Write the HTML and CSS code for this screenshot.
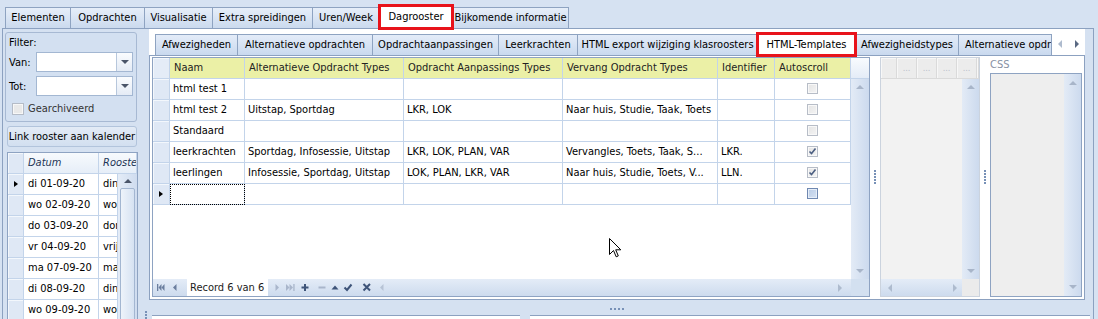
FILE: index.html
```html
<!DOCTYPE html>
<html lang="nl">
  <head>
    <meta charset="UTF-8" />
    <title>Dagrooster</title>
    <link rel="stylesheet" href="styles.css">
  </head>
  <body>
    <div class="tabs">
      <div class="tab">Elementen</div>
      <div class="tab">Opdrachten</div>
      <div class="tab">Visualisatie</div>
      <div class="tab">Extra spreidingen</div>
      <div class="tab">Uren/Week</div>
      <div class="tab active">Dagrooster</div>
      <div class="tab">Bijkomende informatie</div>
    </div>

    <div class="page">
      <!-- linker paneel: filter + dagen -->
      <div class="side">
        <div class="filter">
          <div class="filter-title">Filter:</div>
          <div class="filter-row">
            <span>Van:</span>
            <div class="combo"><span class="combo-btn"><i class="arr-down dark"></i></span></div>
          </div>
          <div class="filter-row">
            <span>Tot:</span>
            <div class="combo"><span class="combo-btn"><i class="arr-down dark"></i></span></div>
          </div>
          <label class="check"><span class="check-box"></span>Gearchiveerd</label>
        </div>
        <button class="link-btn">Link rooster aan kalender</button>
        <div class="dgrid">
          <div class="drow dhead">
            <div class="dc ind"></div>
            <div class="dc">Datum</div>
            <div class="dc">Rooste</div>
          </div>
          <div class="dbody">
            <div class="drow"><div class="dc ind"><i class="row-arrow"></i></div><div class="dc">di 01-09-20</div><div class="dc">dinsdag</div></div>
            <div class="drow"><div class="dc ind"></div><div class="dc">wo 02-09-20</div><div class="dc">woensdag</div></div>
            <div class="drow"><div class="dc ind"></div><div class="dc">do 03-09-20</div><div class="dc">donderdag</div></div>
            <div class="drow"><div class="dc ind"></div><div class="dc">vr 04-09-20</div><div class="dc">vrijdag</div></div>
            <div class="drow"><div class="dc ind"></div><div class="dc">ma 07-09-20</div><div class="dc">maandag</div></div>
            <div class="drow"><div class="dc ind"></div><div class="dc">di 08-09-20</div><div class="dc">dinsdag</div></div>
            <div class="drow"><div class="dc ind"></div><div class="dc">wo 09-09-20</div><div class="dc">woensdag</div></div>
          </div>
          <div class="dscroll">
            <i class="arr-up dark"></i>
            <span class="thumb"></span>
          </div>
        </div>
      </div>

      <div class="vsplit"><span class="vdots short"></span></div>

      <!-- rechter deel: tabbladen -->
      <div class="main">
        <div class="itabs">
          <div class="itab">Afwezigheden</div>
          <div class="itab">Alternatieve opdrachten</div>
          <div class="itab">Opdrachtaanpassingen</div>
          <div class="itab">Leerkrachten</div>
          <div class="itab">HTML export wijziging klasroosters</div>
          <div class="itab active">HTML-Templates</div>
          <div class="itab">Afwezigheidstypes</div>
          <div class="itab cut">Alternatieve opdrachten</div>
          <div class="itab-arrows">
            <i class="arr-left"></i>
            <i class="arr-right dark"></i>
          </div>
        </div>

        <div class="ipage">
          <div class="grid">
            <div class="gbody">
              <div class="grow ghead">
                <div class="gc ind"></div>
                <div class="gc">Naam</div>
                <div class="gc">Alternatieve Opdracht Types</div>
                <div class="gc">Opdracht Aanpassings Types</div>
                <div class="gc">Vervang Opdracht Types</div>
                <div class="gc">Identifier</div>
                <div class="gc">Autoscroll</div>
              </div>
              <div class="grow">
                <div class="gc ind"></div>
                <div class="gc">html test 1</div>
                <div class="gc"></div>
                <div class="gc"></div>
                <div class="gc"></div>
                <div class="gc"></div>
                <div class="gc chk"><span class="cbx"></span></div>
              </div>
              <div class="grow">
                <div class="gc ind"></div>
                <div class="gc">html test 2</div>
                <div class="gc">Uitstap, Sportdag</div>
                <div class="gc">LKR, LOK</div>
                <div class="gc">Naar huis, Studie, Taak, Toets</div>
                <div class="gc"></div>
                <div class="gc chk"><span class="cbx"></span></div>
              </div>
              <div class="grow">
                <div class="gc ind"></div>
                <div class="gc">Standaard</div>
                <div class="gc"></div>
                <div class="gc"></div>
                <div class="gc"></div>
                <div class="gc"></div>
                <div class="gc chk"><span class="cbx"></span></div>
              </div>
              <div class="grow">
                <div class="gc ind"></div>
                <div class="gc">leerkrachten</div>
                <div class="gc">Sportdag, Infosessie, Uitstap</div>
                <div class="gc">LKR, LOK, PLAN, VAR</div>
                <div class="gc">Vervangles, Toets, Taak, S...</div>
                <div class="gc">LKR.</div>
                <div class="gc chk"><span class="cbx on"><svg width="9" height="9" viewBox="0 0 9 9"><path d="M1.5 4.5 L3.5 6.5 L7.5 1.5" fill="none" stroke="#4c5f82" stroke-width="1.6"/></svg></span></div>
              </div>
              <div class="grow">
                <div class="gc ind"></div>
                <div class="gc">leerlingen</div>
                <div class="gc">Infosessie, Sportdag, Uitstap</div>
                <div class="gc">LOK, PLAN, LKR, VAR</div>
                <div class="gc">Naar huis, Studie, Toets, V...</div>
                <div class="gc">LLN.</div>
                <div class="gc chk"><span class="cbx on"><svg width="9" height="9" viewBox="0 0 9 9"><path d="M1.5 4.5 L3.5 6.5 L7.5 1.5" fill="none" stroke="#4c5f82" stroke-width="1.6"/></svg></span></div>
              </div>
              <div class="grow">
                <div class="gc ind"><i class="row-arrow"></i></div>
                <div class="gc focus"></div>
                <div class="gc"></div>
                <div class="gc"></div>
                <div class="gc"></div>
                <div class="gc"></div>
                <div class="gc chk"><span class="cbx new"></span></div>
              </div>
            </div>
            <div class="gcap"></div>
            <div class="vscroll"><i class="arr-up"></i><i class="arr-down"></i></div>
            <div class="nav">
              <svg class="nav-icons" width="34" height="17" viewBox="0 0 34 17">
                <rect x="4" y="5" width="1.3" height="7" fill="#6b7e9e"/>
                <polygon points="5.5,8.5 8.5,5 8.5,12" fill="#6b7e9e"/>
                <polygon points="8.5,8.5 11.5,5 11.5,12" fill="#6b7e9e"/>
                <polygon points="20,8.5 23.5,5 23.5,12" fill="#6b7e9e"/>
              </svg>
              <span class="nav-record">Record 6 van 6</span>
              <svg class="nav-icons" width="122" height="17" viewBox="0 0 122 17">
                <polygon points="7.5,5 7.5,12 11,8.5" fill="#a9b6cb"/>
                <polygon points="18,5 18,12 21.5,8.5" fill="#a9b6cb"/>
                <polygon points="21.5,5 21.5,12 25,8.5" fill="#a9b6cb"/>
                <rect x="25.3" y="5" width="1.3" height="7" fill="#a9b6cb"/>
                <rect x="33.5" y="7.5" width="7" height="2" fill="#3e5479"/>
                <rect x="36" y="5" width="2" height="7" fill="#3e5479"/>
                <rect x="50.5" y="7.5" width="7" height="2" fill="#a9b6cb"/>
                <polygon points="63.5,10.5 70.5,10.5 67,6.5" fill="#3e5479"/>
                <path d="M76.5 8.5 L79 11 L83.5 5.5" fill="none" stroke="#3e5479" stroke-width="2"/>
                <path d="M95.5 5 L102 11.5 M102 5 L95.5 11.5" stroke="#3e5479" stroke-width="2"/>
                <polygon points="115.5,5 115.5,12 112,8.5" fill="#b7c3d5"/>
              </svg>
              <span class="nav-track"><i class="arr-right"></i></span>
            </div>
            <div class="gcorner"></div>
          </div>

          <div class="vsplit"><span class="vdots"></span></div>

          <div class="grid2">
            <div class="g2head">
              <div class="g2c"></div>
              <div class="g2c">...</div>
              <div class="g2c">...</div>
              <div class="g2c">...</div>
              <div class="g2c">...</div>
              <div class="g2c"></div>
            </div>
            <div class="g2body"></div>
            <div class="vscroll"><i class="arr-up"></i><i class="arr-down"></i></div>
            <div class="hscroll"><i class="arr-left"></i><i class="arr-right"></i></div>
            <div class="g2corner"></div>
          </div>

          <div class="vsplit"><span class="vdots"></span></div>

          <div class="css-box">
            <div class="css-label">CSS</div>
            <div class="css-area">
              <div class="vscroll tall"><i class="arr-up"></i><i class="arr-down"></i></div>
            </div>
          </div>
        </div>

        <div class="hsplit"><span class="hdots"></span></div>

        <div class="bottom">
          <div class="bpanel"></div>
          <div class="bpanel"></div>
        </div>
      </div>
    </div>

    <svg class="cursor" width="13" height="20" viewBox="0 0 13 20">
      <path d="M0.5 0.5 L0.5 16.5 L4.5 12.5 L7.2 18.8 L9.3 17.9 L6.7 11.8 L11.8 11.8 Z" fill="#fff" stroke="#000" stroke-width="1"/>
    </svg>
  </body>
</html>
```

FILE: styles.css
```css
* {
  box-sizing: border-box;
}
html,
body {
  margin: 0;
}
body {
  position: relative;
  width: 1098px;
  height: 319px;
  overflow: hidden;
  background: #d6e2f2;
  color: #000;
  font: 11px "DejaVu Sans Condensed", "DejaVu Sans", sans-serif;
  font-stretch: condensed;
}
i {
  display: block;
}

/* pijltjes (scrollbars, combo) */
.arr-up,
.arr-down {
  width: 0;
  height: 0;
  border-left: 4px solid transparent;
  border-right: 4px solid transparent;
}
.arr-up {
  border-bottom: 4px solid #a8b5c9;
}
.arr-down {
  border-top: 4px solid #a8b5c9;
}
.arr-left,
.arr-right {
  width: 0;
  height: 0;
  border-top: 4px solid transparent;
  border-bottom: 4px solid transparent;
}
.arr-left {
  border-right: 4px solid #aebbce;
}
.arr-right {
  border-left: 4px solid #aebbce;
}
.arr-up.dark {
  border-bottom-color: #4a5569;
}
.arr-down.dark {
  border-top-color: #4a5569;
}
.arr-right.dark {
  border-left-color: #5a6982;
}
.row-arrow {
  width: 0;
  height: 0;
  border-top: 3.5px solid transparent;
  border-bottom: 3.5px solid transparent;
  border-left: 4px solid #000;
}

/* hoofdtabbladen */
.tabs {
  display: flex;
  align-items: flex-end;
  height: 28px;
  padding-left: 5px;
}
.tab {
  height: 21px;
  margin-right: -1px;
  border: 1px solid #8ea3c1;
  border-bottom: 0;
  background: linear-gradient(#e6eef9, #cbdaee);
  line-height: 20px;
  text-align: center;
  white-space: nowrap;
}
.tab:nth-child(1) { width: 66px; }
.tab:nth-child(2) { width: 75px; }
.tab:nth-child(3) { width: 69px; }
.tab:nth-child(4) { width: 101px; }
.tab:nth-child(5) { width: 68px; }
.tab:nth-child(6) { width: 74px; }
.tab:nth-child(7) { width: 117px; }
.tab.active {
  position: relative;
  z-index: 1;
  height: 24px;
  margin-bottom: -1px;
  background: #fff;
  line-height: 22px;
  outline: 3px solid #e8131b;
  outline-offset: -2px;
}

.page {
  display: flex;
  height: 291px;
  margin: 0 4px 0 2px;
  border: 1px solid #8ca1c0;
  border-bottom: 0;
  background: #d5e1f1;
}

/* linker paneel */
.side {
  display: flex;
  flex-direction: column;
  flex: none;
  width: 140px;
  padding-top: 3px;
}
.filter {
  display: flex;
  flex-direction: column;
  gap: 3px;
  width: 132px;
  height: 90px;
  margin-left: 2px;
  padding: 3px 3px 0;
  border: 1px solid #a7b9d3;
  border-radius: 3px;
  background: #d3e0f1;
}
.filter-title {
  height: 13px;
  line-height: 13px;
}
.filter-row {
  display: flex;
  align-items: center;
  justify-content: space-between;
  height: 20px;
  margin-bottom: 1px;
}
.combo {
  display: flex;
  justify-content: flex-end;
  width: 97px;
  height: 20px;
  border: 1px solid #a3b7d2;
  background: #fff;
}
.combo-btn {
  display: flex;
  align-items: center;
  justify-content: center;
  width: 16px;
  border-left: 1px solid #b7c7dc;
  background: linear-gradient(#fafcfe, #e4ebf5);
}
.check {
  display: flex;
  align-items: center;
  gap: 4px;
  height: 17px;
  padding-left: 3px;
  color: #333;
}
.check-box {
  width: 12px;
  height: 12px;
  border: 1px solid #b5bcc7;
  background: #e9e9e9;
  box-shadow: inset 0 0 0 1px #f7f7f7;
}
.link-btn {
  width: 130px;
  height: 21px;
  margin: 4px 0 0 4px;
  padding: 0;
  border: 1px solid #b2c4dc;
  border-radius: 3px;
  background: linear-gradient(#e3ebf6, #d2dff0);
  color: #000;
  font: inherit;
}

.dgrid {
  display: grid;
  grid-template-columns: 110px 19px;
  grid-template-rows: 21px 1fr;
  flex: 1;
  width: 131px;
  margin: 5px 0 0 4px;
  border: 1px solid #8ea3c2;
  border-bottom: 0;
  background: #fff;
  overflow: hidden;
}
.drow {
  display: grid;
  grid-template-columns: 16px 75px 1fr;
  height: 21px;
}
.dhead {
  grid-column: 1 / 3;
}
.dhead .dc {
  background: linear-gradient(#f7fafd, #e6eef8);
  color: #1e3556;
  font-style: italic;
}
.dbody {
  overflow: hidden;
}
.dc {
  padding: 0 3px 0 4px;
  border-right: 1px solid #c3d4ea;
  border-bottom: 1px solid #c3d4ea;
  line-height: 20px;
  white-space: nowrap;
  overflow: hidden;
}
.dc.ind {
  display: flex;
  align-items: center;
  justify-content: center;
  padding: 0;
  background: #dfe8f5;
  box-shadow: inset 1px 1px #f3f7fc;
}
.dscroll {
  display: flex;
  flex-direction: column;
  align-items: center;
  gap: 5px;
  padding-top: 5px;
  background: linear-gradient(90deg, #e4ecf7, #cfdcef);
}
.thumb {
  width: 15px;
  height: 140px;
  border: 1px solid #a3b6d1;
  border-radius: 2px;
  background: linear-gradient(90deg, #eef3fa, #d6e2f2);
}

.vsplit {
  display: flex;
  align-items: center;
  justify-content: center;
  flex: none;
  width: 10px;
}
.page > .vsplit {
  align-items: flex-end;
  width: 6px;
  padding-bottom: 0;
}
.vdots {
  width: 2px;
  height: 14px;
  background: repeating-linear-gradient(#7891b7 0 2px, transparent 2px 3px);
}
.vdots.short {
  height: 8px;
}

/* rechter deel */
.main {
  display: flex;
  flex-direction: column;
  flex: 1;
  padding-right: 8px;
}
.itabs {
  display: flex;
  align-items: flex-end;
  height: 26px;
  padding-left: 6px;
  background: #fff;
}
.itab {
  height: 21px;
  margin-right: -1px;
  border: 1px solid #8ea3c1;
  border-bottom: 0;
  background: linear-gradient(#e4ecf8, #c9d9ee);
  line-height: 20px;
  text-align: center;
  white-space: nowrap;
  overflow: hidden;
}
.itab:nth-child(1) { width: 83px; }
.itab:nth-child(2) { width: 136px; }
.itab:nth-child(3) { width: 127px; }
.itab:nth-child(4) { width: 80px; }
.itab:nth-child(5) { width: 181px; }
.itab:nth-child(6) { width: 99px; }
.itab:nth-child(7) { width: 104px; }
.itab.active {
  position: relative;
  z-index: 1;
  height: 23px;
  margin-bottom: -1px;
  background: #fff;
  line-height: 21px;
  outline: 3px solid #e8131b;
  outline-offset: -2px;
}
.itab.cut {
  width: 94px;
  padding-left: 6px;
  text-align: left;
}
.itab-arrows {
  display: flex;
  align-items: center;
  gap: 13px;
  height: 21px;
  margin-left: 7px;
}

.ipage {
  display: flex;
  height: 247px;
  padding: 1px 2px 2px;
  border: 1px solid #8ca1c0;
  background: #fff;
}

.grid {
  display: grid;
  grid-template-columns: 698px 18px;
  grid-template-rows: 21px 1fr 17px;
  width: 718px;
  border: 1px solid #8ea3c2;
  flex: none;
}
.gbody {
  grid-column: 1;
  grid-row: 1 / 3;
  overflow: hidden;
}
.grow {
  display: grid;
  grid-template-columns: 17px 75px 159px 159px 155px 57px 76px;
  height: 21px;
}
.gc {
  padding: 0 3px;
  border-right: 1px solid #c3d4ea;
  border-bottom: 1px solid #c3d4ea;
  line-height: 20px;
  white-space: nowrap;
  overflow: hidden;
}
.gc.ind {
  display: flex;
  align-items: center;
  justify-content: center;
  padding: 0;
  background: #dfe8f5;
  box-shadow: inset 1px 1px #f3f7fc;
}
.ghead .gc {
  padding-left: 4px;
  background: #ebf0a6;
  color: #222;
}
.ghead .gc.ind {
  background: #e4ecf7;
}
.gc.chk {
  display: flex;
  align-items: center;
  justify-content: center;
}
.gc.focus {
  outline: 1px dotted #000;
  outline-offset: -1px;
}
.cbx {
  display: flex;
  align-items: center;
  justify-content: center;
  width: 11px;
  height: 11px;
  border: 1px solid #b7bdc7;
  background: linear-gradient(135deg, #e4e4e4, #f4f4f4);
  box-shadow: inset 0 0 0 1px #f8f8f8;
}
.cbx.new {
  border-color: #6f88b1;
  background: linear-gradient(135deg, #b8cbe6, #d6e2f2);
  box-shadow: inset 0 0 0 1px #e6eef8;
}
.gcap {
  grid-column: 2;
  grid-row: 1;
  border-bottom: 1px solid #c3d4ea;
  background: linear-gradient(#f8fbfe, #e4ecf7);
}
.vscroll {
  display: flex;
  flex-direction: column;
  align-items: center;
  justify-content: space-between;
  padding: 6px 0;
  background: linear-gradient(90deg, #e3ebf6, #ccdaee);
}
.grid .vscroll {
  grid-column: 2;
  grid-row: 2;
}
.nav {
  grid-column: 1;
  grid-row: 3;
  display: flex;
  align-items: stretch;
  background: linear-gradient(#e4ecf7, #cddbee);
}
.nav-icons {
  flex: none;
}
.nav-record {
  width: 81px;
  padding-left: 3px;
  background: #fff;
  color: #1b1b1b;
  line-height: 17px;
  white-space: nowrap;
}
.nav-track {
  display: flex;
  align-items: center;
  justify-content: flex-end;
  flex: 1;
  padding-right: 9px;
}
.gcorner {
  grid-column: 2;
  grid-row: 3;
  background: #d3e0f0;
}

.grid2 {
  display: grid;
  grid-template-columns: 81px 17px;
  grid-template-rows: 21px 1fr 17px;
  width: 100px;
  border: 1px solid #cbd3de;
  background: #f2f2f2;
  flex: none;
}
.g2head {
  grid-column: 1 / 3;
  display: grid;
  grid-template-columns: 16px 20px 20px 20px 20px 1fr;
  background: #ececec;
}
.g2c {
  border-right: 1px solid #dadada;
  border-bottom: 1px solid #dadada;
  color: #b9c0cb;
  font-size: 9px;
  line-height: 20px;
  text-align: center;
  box-shadow: inset 1px 1px #f7f7f7;
}
.g2body {
  grid-column: 1;
  grid-row: 2;
}
.grid2 .vscroll {
  grid-column: 2;
  grid-row: 2;
}
.hscroll {
  grid-column: 1;
  grid-row: 3;
  display: flex;
  align-items: center;
  justify-content: space-between;
  padding: 0 5px 0 7px;
  background: linear-gradient(#e4ecf7, #cddbee);
}
.g2corner {
  grid-column: 2;
  grid-row: 3;
  background: #ebebeb;
}

.css-box {
  display: flex;
  flex-direction: column;
  width: 92px;
  flex: none;
}
.css-label {
  height: 16px;
  color: #8791a3;
  line-height: 15px;
}
.css-area {
  display: flex;
  justify-content: flex-end;
  flex: 1;
  border: 1px solid #8ea3c2;
  background: #eeeeee;
}
.vscroll.tall {
  width: 17px;
  padding: 7px 0 7px;
}

.hsplit {
  display: flex;
  justify-content: center;
  height: 15px;
  padding-top: 8px;
}
.hdots {
  width: 14px;
  height: 2px;
  background: repeating-linear-gradient(90deg, #7891b7 0 2px, transparent 2px 4px);
}
.bottom {
  display: flex;
  gap: 10px;
  margin: 0 -5px 0 3px;
}
.bpanel {
  height: 4px;
  border-top: 1px solid #8ca1c0;
  background: #fff;
}
.bpanel:first-child {
  width: 368px;
}
.bpanel:last-child {
  flex: 1;
}

/* muisaanwijzer boven de inhoud */
.cursor {
  position: absolute;
  left: 609px;
  top: 238px;
}
```
